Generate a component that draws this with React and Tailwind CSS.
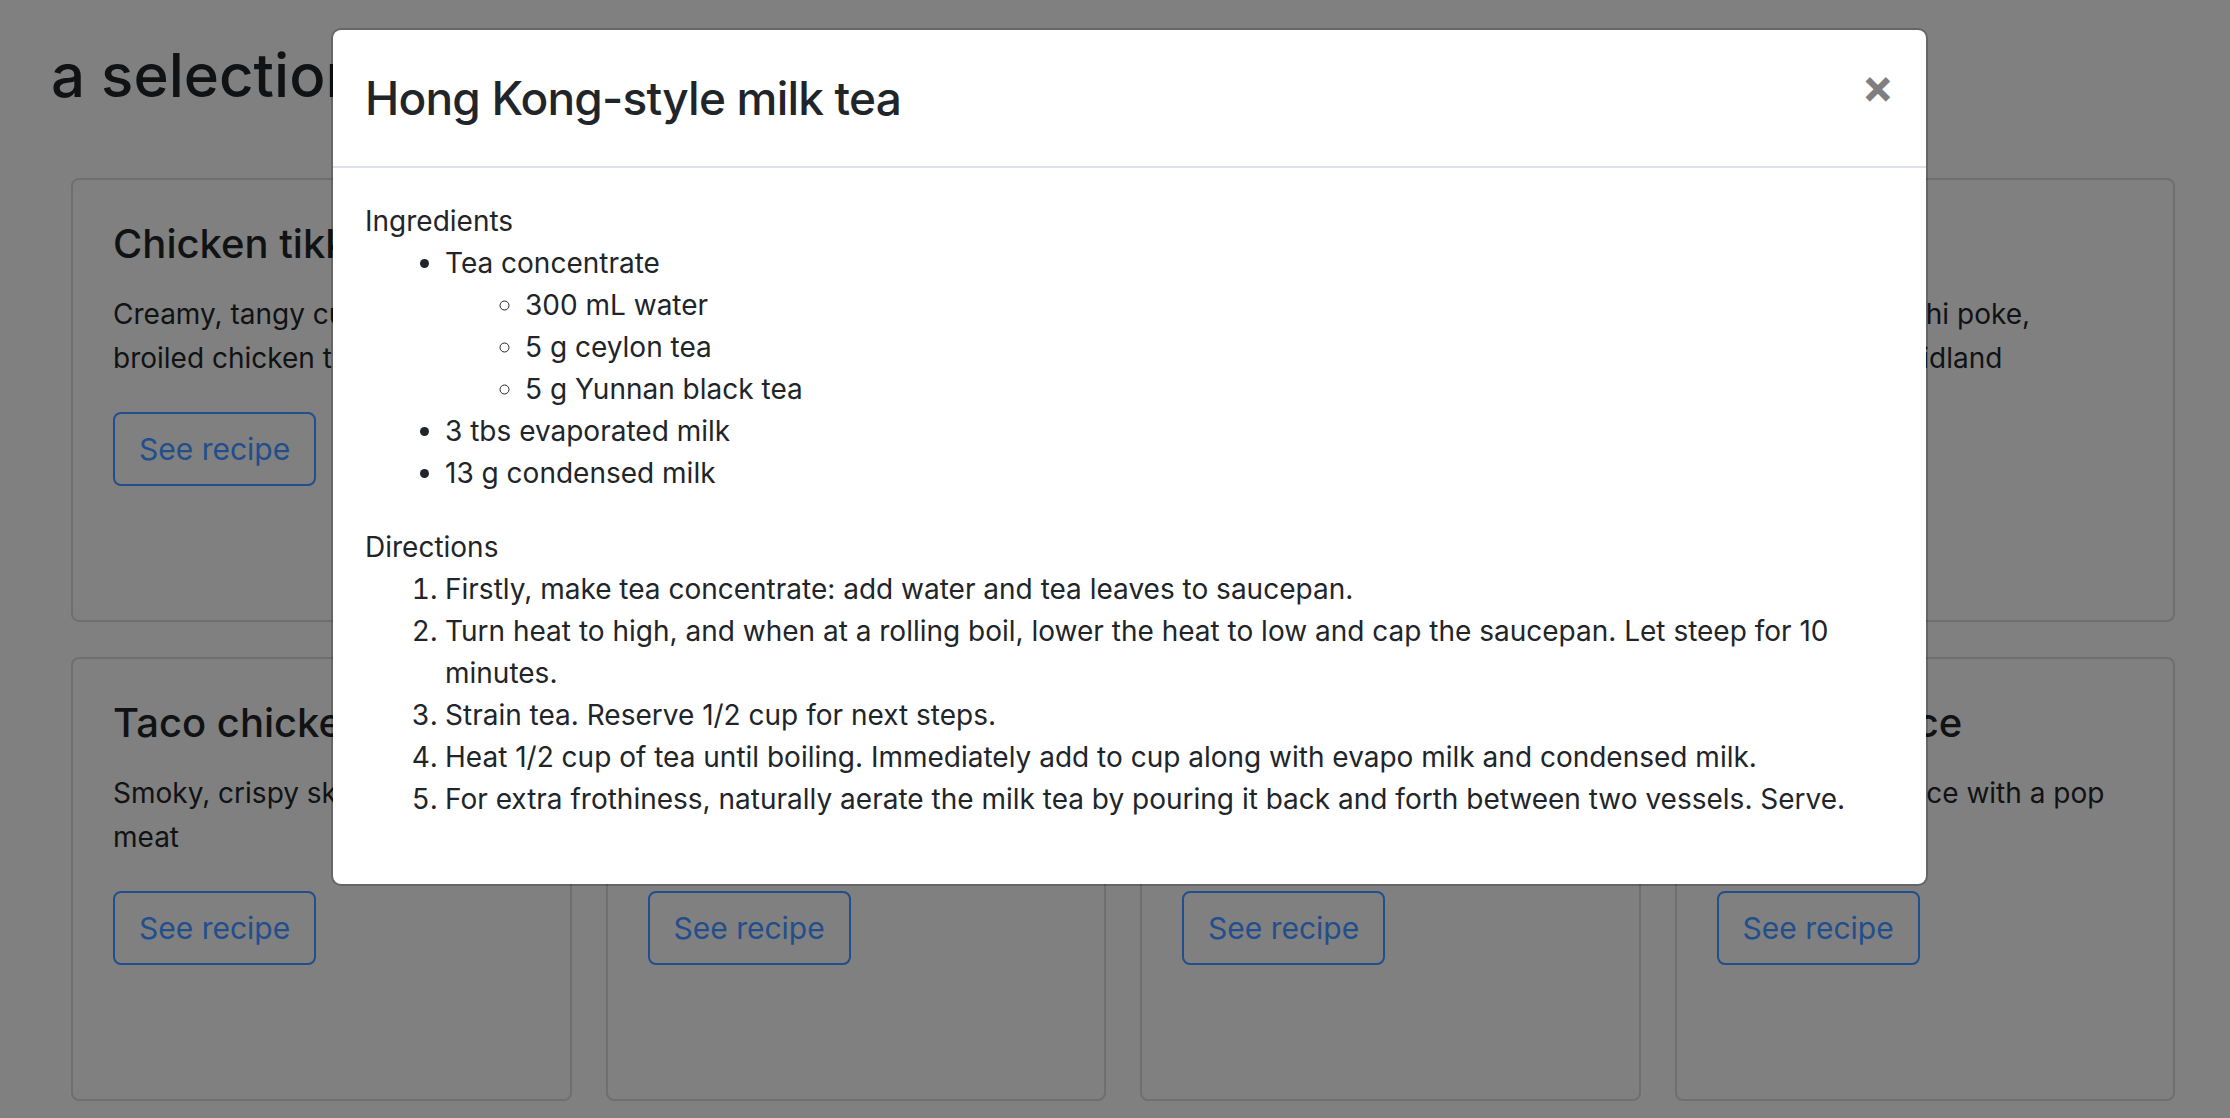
import React from 'react';

const cards = [
  { title: 'Chicken tikka masala', lines: ['Creamy, tangy curry sauce', 'broiled chicken thighs'] },
  { title: 'Pad see ew', lines: ['Wide rice noodles with soy', 'sauce and Chinese broccoli'] },
  { title: 'Shoyu ramen', lines: ['Clear soy-based broth with', 'chewy noodles and chashu'] },
  { title: 'Poke bowl', lines: ['Bright, smoky Ahi poke,', 'caught in the Midland'] },
  { title: 'Taco chicken', lines: ['Smoky, crispy skin and tender', 'meat'] },
  { title: 'Beef bulgogi', lines: ['Sweet, savory grilled beef', 'with sesame'] },
  { title: 'Lamb biryani', lines: ['Spiced basmati layered with', 'slow-cooked lamb'] },
  { title: 'Coconut rice', lines: ['Fluffy, buttery rice with a pop', 'of lime'] },
];

function RecipeCard({ card }) {
  return (
    <div className="h-[444px] rounded-[8px] border-2 border-[#6f6f6f] p-[40px]">
      <h5 className="mb-[24px] whitespace-nowrap text-[40px] font-medium leading-[48px]">{card.title}</h5>
      <p className="mb-[32px] whitespace-nowrap text-[28px] leading-[44px]">
        {card.lines[0]}
        <br />
        {card.lines[1]}
      </p>
      <button className="rounded-[8px] border-2 border-[#234e8c] px-[24px] py-[11px] text-[30px] leading-[48px] text-[#234e8c]">
        See recipe
      </button>
    </div>
  );
}

export default function App() {
  return (
    <div className="relative min-h-screen w-full overflow-hidden bg-[#808080] font-[Inter,sans-serif] text-[#101214]">
      {/* page behind the backdrop */}
      <div className="pl-[51px] pt-[39px]">
        <h1 className="text-[60px] font-medium leading-[72px]">a selection of recipes</h1>
      </div>
      <div className="mt-[67px] grid grid-cols-4 gap-x-[34px] gap-y-[35px] pl-[71px] pr-[55px]">
        {cards.map((c) => (
          <RecipeCard key={c.title} card={c} />
        ))}
      </div>

      {/* modal */}
      <div className="absolute left-[331px] top-[28px] w-[1597px] rounded-[10px] border-2 border-black/20 bg-white bg-clip-padding text-[#212529]">
        <div className="flex items-start justify-between border-b-2 border-[#dee2e6] p-[32px]">
          <h4 className="text-[46px] font-medium leading-[72px] tracking-[-0.8px]">Hong Kong-style milk tea</h4>
          <button className="-m-[32px] ml-auto p-[32px] text-[48px] font-bold leading-[48px] text-black/50">
            ×
          </button>
        </div>
        <div className="p-[32px] text-[28px] leading-[42px]">
          <div>Ingredients</div>
          <ul className="mb-[32px] list-disc pl-[80px]">
            <li>
              Tea concentrate
              <ul className="list-[circle] pl-[80px]">
                <li>300 mL water</li>
                <li>5 g ceylon tea</li>
                <li>5 g Yunnan black tea</li>
              </ul>
            </li>
            <li>3 tbs evaporated milk</li>
            <li>13 g condensed milk</li>
          </ul>
          <div>Directions</div>
          <ol className="mb-[32px] list-decimal pl-[80px]">
            <li>Firstly, make tea concentrate: add water and tea leaves to saucepan.</li>
            <li>
              Turn heat to high, and when at a rolling boil, lower the heat to low and cap the saucepan. Let steep for 10
              minutes.
            </li>
            <li>Strain tea. Reserve 1/2 cup for next steps.</li>
            <li>Heat 1/2 cup of tea until boiling. Immediately add to cup along with evapo milk and condensed milk.</li>
            <li>For extra frothiness, naturally aerate the milk tea by pouring it back and forth between two vessels. Serve.</li>
          </ol>
        </div>
      </div>
    </div>
  );
}
